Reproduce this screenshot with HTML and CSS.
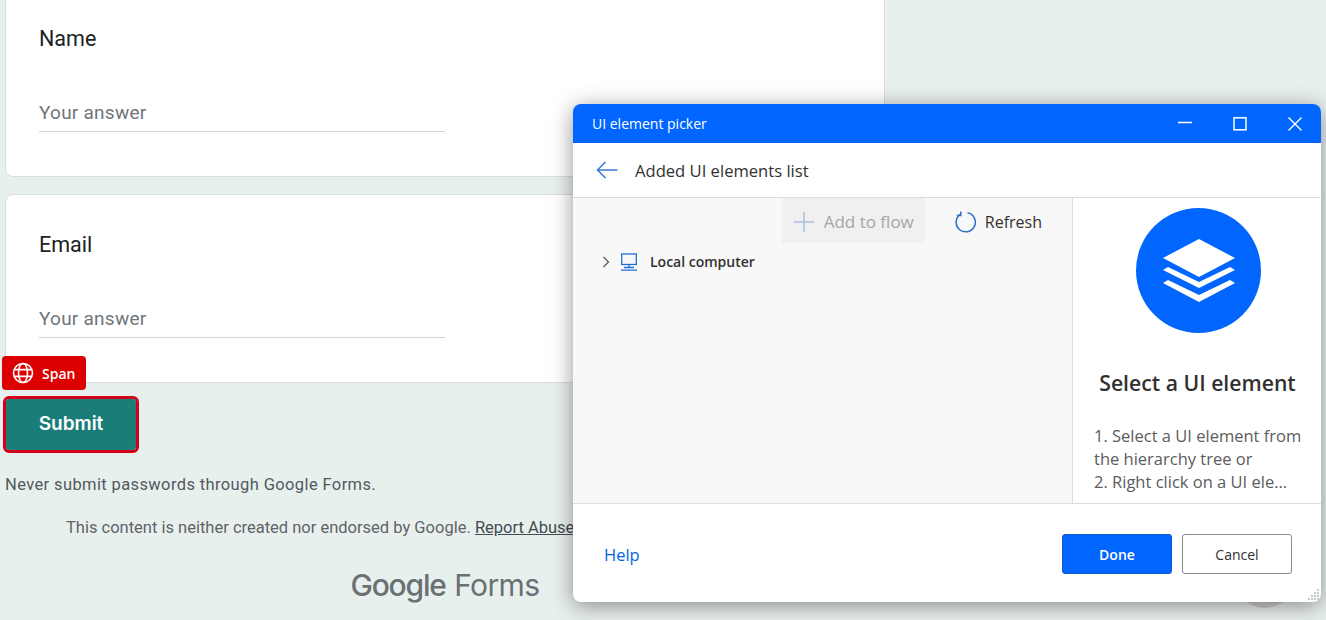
FILE: index.html
```html
<!doctype html>
<html lang="en">
<head>
    <meta charset="UTF-8">
    <title>UI element picker</title>
    <link rel="stylesheet" href="styles.css">
</head>
<body>
    <div class="form">
        <div class="card card-name">
            <div class="label">Name</div>
            <div class="answer">Your answer</div>
        </div>
        <div class="card card-email">
            <div class="label">Email</div>
            <div class="answer">Your answer</div>
        </div>
        <div class="submit-row">
            <button class="submit">Submit</button>
        </div>
        <p class="never">Never submit passwords through Google Forms.</p>
        <p class="disclaimer">This content is neither created nor endorsed by Google. <u>Report Abuse</u> - <u>Terms of Service</u></p>
        <div class="brand"><span class="brand-g">Google</span> <span class="brand-f">Forms</span></div>
    </div>

    <div class="badge">
        <svg width="22" height="22" viewBox="0 0 22 22" fill="none" stroke="#fff" stroke-width="1.6">
            <circle cx="11" cy="11" r="9.5"/>
            <ellipse cx="11" cy="11" rx="4.5" ry="9.5"/>
            <path d="M2.2 7.6h17.6M2.2 14.4h17.6"/>
        </svg>
        <span>Span</span>
    </div>

    <div class="help-circle"></div>

    <div class="picker">
        <div class="titlebar">
            <span class="title">UI element picker</span>
            <div class="win-btns">
                <svg width="16" height="16" viewBox="0 0 16 16" stroke="#fff" stroke-width="1.5"><path d="M1 6.5h14"/></svg>
                <svg width="16" height="16" viewBox="0 0 16 16" fill="none" stroke="#fff" stroke-width="1.5"><rect x="2" y="1.8" width="12" height="12"/></svg>
                <svg width="16" height="16" viewBox="0 0 16 16" stroke="#fff" stroke-width="1.4"><path d="M1.500 1.500l13 13M14.500 1.500l-13 13"/></svg>
            </div>
        </div>
        <div class="subhead">
            <svg width="22" height="18" viewBox="0 0 22 18" fill="none" stroke="#3b78d8" stroke-width="1.5"><path d="M21.500 9H1.500M9.500 1L1.500 9l8 8"/></svg>
            <span>Added UI elements list</span>
        </div>
        <div class="body">
            <div class="tree-pane">
                <div class="toolbar">
                    <div class="tool tool-off">
                        <svg width="22" height="22" viewBox="0 0 22 22" stroke="#a9bfdf" stroke-width="1.5"><path d="M11 1v20M1 11h20"/></svg>
                        <span>Add to flow</span>
                    </div>
                    <div class="tool">
                        <svg width="22" height="22" viewBox="0 0 22 22" fill="none" stroke="#2f6fc9" stroke-width="1.5"><path d="M6.500 3.200A9.600 9.600 0 1 0 13.500 1.800"/><path d="M6.800 0.500v4h-4"/></svg>
                        <span>Refresh</span>
                    </div>
                </div>
                <div class="tree-row">
                    <svg width="8" height="12" viewBox="0 0 8 12" fill="none" stroke="#555" stroke-width="1.2"><path d="M1.500 1l5 5-5 5"/></svg>
                    <svg width="18" height="18" viewBox="0 0 18 18" fill="none" stroke="#1f6fd6" stroke-width="1.3"><rect x="1.700" y="1" width="14.600" height="10.500"/><path d="M9 11.500v2.500M4 14.500h10M1 17.200h16"/></svg>
                    <span>Local computer</span>
                </div>
            </div>
            <div class="side-pane">
                <div class="big-icon">
                    <svg width="72" height="63" viewBox="0 0 72 63" fill="#fff">
                        <path d="M36 0L72 19L36 38L0 19Z"/>
                        <path d="M5 28L36 43L67 28L72 31L36 49L0 31Z"/>
                        <path d="M5 41L36 56L67 41L72 44L36 63L0 44Z"/>
                    </svg>
                </div>
                <div class="side-title">Select a UI element</div>
                <div class="side-text">1. Select a UI element from the hierarchy tree or<br>2. Right click on a UI ele...</div>
            </div>
        </div>
        <div class="footer">
            <span class="help">Help</span>
            <div class="footer-btns">
                <button class="btn btn-done">Done</button>
                <button class="btn btn-cancel">Cancel</button>
            </div>
        </div>
        <svg class="grip" width="14" height="12" viewBox="0 0 14 12" fill="#c4c8c8">
            <path d="M11 0h2v2h-2zM8 3h2v2H8zM11 3h2v2h-2zM5 6h2v2H5zM8 6h2v2H8zM11 6h2v2h-2zM2 9h2v2H2zM5 9h2v2H5zM8 9h2v2H8zM11 9h2v2h-2z"/>
        </svg>
    </div>
</body>
</html>
```

FILE: styles.css
```css
*{
    margin: 0;
    padding: 0;
    box-sizing: border-box;
}
html,body{
    width: 100%;
    height: 100%;
    overflow: hidden;
}
body{
    background: #e8f0ee;
    font-family: Roboto, "Liberation Sans", sans-serif;
    color: #202124;
}
.form{
    width: 880px;
    margin: -20px 0 0 5px;
}
.card{
    background: #fff;
    border: 1px solid #dadce0;
    border-radius: 8px;
    padding: 0 33px;
}
.card-name{
    height: 197px;
    padding-top: 44px;
    margin-bottom: 17px;
}
.card-email{
    height: 189px;
    padding-top: 36px;
}
.label{
    font-size: 21.500px;
    line-height: 28px;
    height: 28px;
}
.answer{
    width: 406px;
    margin-top: 47px;
    height: 32px;
    font-size: 19px;
    line-height: 26px;
    letter-spacing: .25px;
    color: #70757a;
    border-bottom: 1px solid #cfd3d6;
}
.submit-row{
    margin: 13px 0 0 -2px;
    width: 136px;
    height: 57px;
    border: 3px solid #d2001a;
    border-radius: 6px;
    background: #e8d8c8;
}
.submit{
    display: block;
    width: 100%;
    height: 100%;
    padding-bottom: 3px;
    border: none;
    border-radius: 3px;
    background: #1a7d77;
    color: #fff;
    font-family: Inter, Roboto, sans-serif;
    font-size: 19px;
    font-weight: 600;
}
.never{
    margin-top: 22px;
    font-size: 16.500px;
    line-height: 20px;
    letter-spacing: .38px;
    color: #52595e;
}
.disclaimer{
    margin-top: 23px;
    padding-left: 61px;
    white-space: nowrap;
    font-size: 16.500px;
    line-height: 20px;
    color: #5f6368;
}
.disclaimer u{
    color: #444b50;
}
.brand{
    margin-top: 27px;
    text-align: center;
    font-family: Inter, Roboto, sans-serif;
    font-size: 30px;
    line-height: 40px;
    color: #6a7073;
}
.brand-g{
    font-weight: 500;
    letter-spacing: -1.200px;
}
.brand-f{
    letter-spacing: -.6px;
}
.badge{
    position: absolute;
    left: 2px;
    top: 356px;
    width: 84px;
    height: 34px;
    display: flex;
    align-items: center;
    gap: 8px;
    padding-left: 10px;
    background: #dd0000;
    border-radius: 4px;
    color: #fff;
    font-family: "Open Sans", sans-serif;
    font-size: 14px;
    font-weight: 600;
}
.help-circle{
    position: absolute;
    left: 1235px;
    top: 548px;
    width: 60px;
    height: 60px;
    border-radius: 50%;
    background: #cfcfcf;
}
.picker{
    position: absolute;
    left: 573px;
    top: 104px;
    width: 748px;
    height: 498px;
    display: flex;
    flex-direction: column;
    background: #fff;
    border-radius: 8px;
    overflow: hidden;
    box-shadow: 0 4px 22px rgba(0,0,0,.42);
    font-family: "Open Sans", "Noto Sans", sans-serif;
    color: #323130;
}
.titlebar{
    height: 39px;
    flex: none;
    display: flex;
    align-items: center;
    justify-content: space-between;
    padding: 0 18px 0 19px;
    background: #0066ff;
    color: #fff;
    font-size: 14px;
}
.win-btns{
    display: flex;
    gap: 39px;
}
.subhead{
    height: 55px;
    flex: none;
    display: flex;
    align-items: center;
    gap: 17px;
    padding-left: 23px;
    border-bottom: 1px solid #dcdcdc;
    font-size: 16.600px;
}
.body{
    flex: 1;
    display: flex;
    min-height: 0;
    border-bottom: 1px solid #dcdcdc;
}
.tree-pane{
    width: 500px;
    flex: none;
    background: #f8f8f8;
    border-right: 1px solid #dcdcdc;
}
.toolbar{
    height: 45px;
    display: flex;
    justify-content: flex-end;
    align-items: stretch;
}
.tool{
    display: flex;
    align-items: center;
    gap: 9px;
    padding: 2px 30px 0 29px;
    font-size: 16px;
}
.tool-off{
    padding: 2px 11px 0;
    background: #f0f0f0;
    color: #a6a6a6;
    font-size: 17px;
}
.tree-row{
    margin-top: 9px;
    padding-left: 29px;
    display: flex;
    align-items: center;
    gap: 10px;
    font-size: 14px;
    font-weight: 600;
}
.tree-row span{
    margin-left: 2px;
}
.side-pane{
    flex: 1;
    padding: 10px 12px 0 21px;
    overflow: hidden;
}
.big-icon{
    width: 125px;
    height: 125px;
    margin-left: 42px;
    border-radius: 50%;
    background: #0066ff;
    display: flex;
    align-items: center;
    justify-content: center;
}
.side-title{
    margin-top: 36px;
    text-align: center;
    margin-right: 8px;
    font-size: 21.200px;
    line-height: 28px;
    font-weight: 600;
    white-space: nowrap;
}
.side-text{
    margin-top: 27px;
    font-size: 16.500px;
    line-height: 23px;
    color: #5c5c5c;
}
.footer{
    height: 98px;
    flex: none;
    display: flex;
    align-items: center;
    justify-content: space-between;
    padding: 2px 29px 0 31px;
}
.help{
    font-size: 16.500px;
    color: #0066dd;
}
.footer-btns{
    display: flex;
    gap: 10px;
}
.btn{
    width: 110px;
    height: 40px;
    border-radius: 3px;
    font-family: "Open Sans", sans-serif;
    font-size: 14px;
    background: #fff;
    color: #323130;
    border: 1px solid #8a8a8a;
}
.btn-done{
    background: #0066ff;
    border-color: #0a5ad2;
    color: #fff;
    font-weight: 600;
}
.grip{
    position: absolute;
    right: 1px;
    bottom: 1px;
}
```
